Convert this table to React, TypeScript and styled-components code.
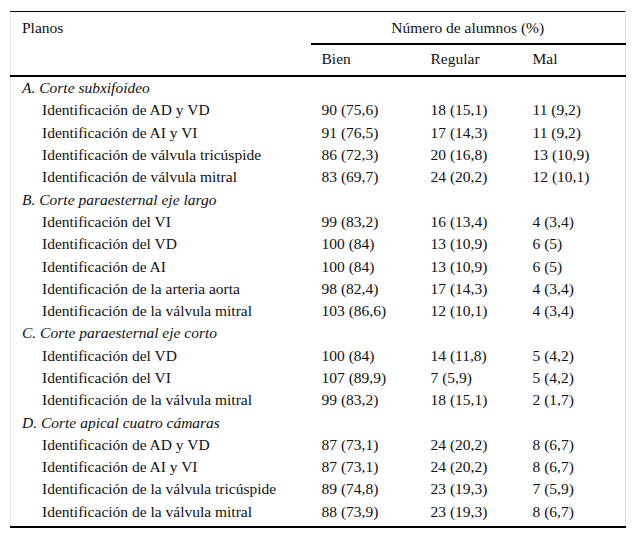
import React from 'react'
import styled, { createGlobalStyle } from 'styled-components'

const GlobalStyle = createGlobalStyle`
  body {
    margin: 0;
    background: #fff;
  }
`

type Row = { label: string; bien: string; regular: string; mal: string }
type Section = { title: string; rows: Row[] }

const sections: Section[] = [
  {
    title: 'A. Corte subxifoideo',
    rows: [
      { label: 'Identificación de AD y VD', bien: '90 (75,6)', regular: '18 (15,1)', mal: '11 (9,2)' },
      { label: 'Identificación de AI y VI', bien: '91 (76,5)', regular: '17 (14,3)', mal: '11 (9,2)' },
      { label: 'Identificación de válvula tricúspide', bien: '86 (72,3)', regular: '20 (16,8)', mal: '13 (10,9)' },
      { label: 'Identificación de válvula mitral', bien: '83 (69,7)', regular: '24 (20,2)', mal: '12 (10,1)' },
    ],
  },
  {
    title: 'B. Corte paraesternal eje largo',
    rows: [
      { label: 'Identificación del VI', bien: '99 (83,2)', regular: '16 (13,4)', mal: '4 (3,4)' },
      { label: 'Identificación del VD', bien: '100 (84)', regular: '13 (10,9)', mal: '6 (5)' },
      { label: 'Identificación de AI', bien: '100 (84)', regular: '13 (10,9)', mal: '6 (5)' },
      { label: 'Identificación de la arteria aorta', bien: '98 (82,4)', regular: '17 (14,3)', mal: '4 (3,4)' },
      { label: 'Identificación de la válvula mitral', bien: '103 (86,6)', regular: '12 (10,1)', mal: '4 (3,4)' },
    ],
  },
  {
    title: 'C. Corte paraesternal eje corto',
    rows: [
      { label: 'Identificación del VD', bien: '100 (84)', regular: '14 (11,8)', mal: '5 (4,2)' },
      { label: 'Identificación del VI', bien: '107 (89,9)', regular: '7 (5,9)', mal: '5 (4,2)' },
      { label: 'Identificación de la válvula mitral', bien: '99 (83,2)', regular: '18 (15,1)', mal: '2 (1,7)' },
    ],
  },
  {
    title: 'D. Corte apical cuatro cámaras',
    rows: [
      { label: 'Identificación de AD y VD', bien: '87 (73,1)', regular: '24 (20,2)', mal: '8 (6,7)' },
      { label: 'Identificación de AI y VI', bien: '87 (73,1)', regular: '24 (20,2)', mal: '8 (6,7)' },
      { label: 'Identificación de la válvula tricúspide', bien: '89 (74,8)', regular: '23 (19,3)', mal: '7 (5,9)' },
      { label: 'Identificación de la válvula mitral', bien: '88 (73,9)', regular: '23 (19,3)', mal: '8 (6,7)' },
    ],
  },
]

const Page = styled.div`
  padding: 11px 0 0 10px;
  font-family: 'Liberation Serif', 'Times New Roman', serif;
  font-size: 15.5px;
  color: #111;
`

const Table = styled.table`
  width: 615px;
  border-collapse: collapse;
  border-top: 1px solid #000;
  border-bottom: 2px solid #000;
  border-left: 1px solid #e6e6e6;
  border-right: 1px solid #e0e0e0;
  table-layout: fixed;

  tbody tr:last-child td {
    padding-bottom: 3px;
  }
`

const HeadCell = styled.th<{ $center?: boolean; $rule?: boolean; $pad?: number }>`
  font-weight: normal;
  text-align: ${p => (p.$center ? 'center' : 'left')};
  vertical-align: top;
  padding: 5px 0 4px ${p => p.$pad ?? 10}px;
  height: 22px;
  line-height: 22px;
  border-bottom: ${p => (p.$rule ? '2px solid #000' : 'none')};
`

const SubHeadRow = styled.tr`
  border-bottom: 2px solid #000;
  & > th {
    padding-top: 3px;
    padding-bottom: 5px;
  }
`

const SectionCell = styled.td`
  font-style: italic;
  padding: 0 0 0 11px;
  height: 22.3px;
  line-height: 20px;
`

const Cell = styled.td<{ $indent?: boolean; $pad?: number }>`
  padding: 0 0 0 ${p => (p.$indent ? 31 : p.$pad ?? 10)}px;
  height: 22.3px;
  line-height: 22px;
  white-space: nowrap;
`

export default function App() {
  return (
    <Page>
      <GlobalStyle />
      <Table>
        <colgroup>
          <col style={{ width: 300 }} />
          <col style={{ width: 110 }} />
          <col style={{ width: 102 }} />
          <col style={{ width: 103 }} />
        </colgroup>
        <thead>
          <tr>
            <HeadCell rowSpan={2} $pad={11}>Planos</HeadCell>
            <HeadCell colSpan={3} $center $rule $pad={0}>Número de alumnos (%)</HeadCell>
          </tr>
          <SubHeadRow>
            <HeadCell $pad={11}>Bien</HeadCell>
            <HeadCell $pad={10}>Regular</HeadCell>
            <HeadCell $pad={10}>Mal</HeadCell>
          </SubHeadRow>
        </thead>
        <tbody>
          {sections.map(s => (
            <React.Fragment key={s.title}>
              <tr>
                <SectionCell colSpan={4}>{s.title}</SectionCell>
              </tr>
              {s.rows.map(r => (
                <tr key={s.title + r.label}>
                  <Cell $indent>{r.label}</Cell>
                  <Cell $pad={11}>{r.bien}</Cell>
                  <Cell>{r.regular}</Cell>
                  <Cell>{r.mal}</Cell>
                </tr>
              ))}
            </React.Fragment>
          ))}
        </tbody>
      </Table>
    </Page>
  )
}
